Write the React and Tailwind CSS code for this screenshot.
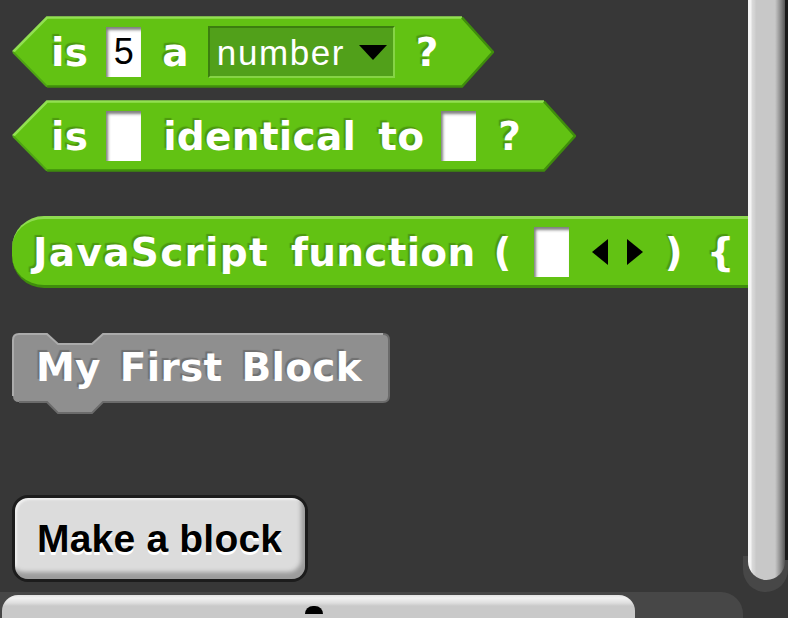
import React from "react";

const label =
  "font-['DejaVu_Sans',sans-serif] font-bold text-[39px] tracking-[0.3px] leading-none text-white [text-shadow:-2px_-2px_1px_rgba(0,0,0,0.22)]";

const Slot = ({ children, className = "" }) => (
  <div
    className={`flex h-[50px] w-[35px] items-center justify-center bg-white shadow-[inset_2px_3px_3px_rgba(0,0,0,0.5)] font-['Liberation_Sans',sans-serif] text-[36px] leading-none text-black ${className}`}
  >
    {children}
  </div>
);

const Hexagon = ({ width, children }) => {
  const w = width;
  const pts = `1,36 35,1 ${w - 32},1 ${w - 1},36 ${w - 32},71 35,71`;
  return (
    <div className="relative h-[72px]" style={{ width }}>
      <svg className="absolute inset-0" width={w} height="72" viewBox={`0 0 ${w} 72`}>
        <polygon points={pts} fill="#62c213" />
        <polyline points={`1,36 35,1.5 ${w - 32},1.5`} fill="none" stroke="#92e052" strokeWidth="2.5" />
        <polyline
          points={`${w - 32},1.5 ${w - 1},36 ${w - 32},70.5 35,70.5`}
          fill="none"
          stroke="#3f8d0c"
          strokeWidth="2.5"
        />
        <polyline points={`1,36 35,70.5`} fill="none" stroke="#4ea314" strokeWidth="2" />
      </svg>
      <div className="relative flex h-full items-center pl-[39px]">{children}</div>
    </div>
  );
};

const Dropdown = () => (
  <div className="flex h-[52px] w-[187px] items-center justify-between border-2 border-t-[#3c7e0f] border-l-[#3c7e0f] border-r-[#86d446] border-b-[#86d446] bg-[#51a01a] pl-[7px] pr-[6px]">
    <span className="font-['Liberation_Sans',sans-serif] text-[35px] leading-none tracking-[1.6px] text-white">
      number
    </span>
    <svg width="28" height="15" viewBox="0 0 28 15">
      <polygon points="0,0 28,0 14,15" fill="#000" />
    </svg>
  </div>
);

export default function App() {
  return (
    <div className="flex h-[618px] w-[788px] flex-col overflow-hidden bg-[#373737]">
      <div className="flex h-[592px]">
        {/* palette */}
        <div className="flex w-[748px] flex-col overflow-hidden pl-[12px] pt-[16px]">
          <Hexagon width={482}>
            <span className={label}>is</span>
            <Slot className="ml-[18px]">5</Slot>
            <span className={`${label} ml-[21px]`}>a</span>
            <div className="ml-[19px]">
              <Dropdown />
            </div>
            <span className={`${label} ml-[21px]`}>?</span>
          </Hexagon>

          <div className="mt-[12px]">
            <Hexagon width={564}>
              <span className={label}>is</span>
              <Slot className="ml-[18px]">{""}</Slot>
              <span className={`${label} ml-[22px]`}>identical</span>
              <span className={`${label} ml-[22px]`}>to</span>
              <Slot className="ml-[17px]">{""}</Slot>
              <span className={`${label} ml-[22px]`}>?</span>
            </Hexagon>
          </div>

          <div className="mt-[44px] flex h-[72px] w-[760px] shrink-0 items-center rounded-l-[32px] border-t-[3px] border-b-[3px] border-t-[#8edb50] border-b-[#3f8d0c] bg-[#62c213] pl-[21px]">
            <span className={`${label} tracking-[1.3px]`}>JavaScript</span>
            <span className={`${label} ml-[22px]`}>function</span>
            <span className={`${label} ml-[18px]`}>(</span>
            <Slot className="ml-[22px]">{""}</Slot>
            <svg className="ml-[23px]" width="16" height="26" viewBox="0 0 16 26">
              <polygon points="16,0 16,26 0,13" fill="#000" />
            </svg>
            <svg className="ml-[19px]" width="16" height="26" viewBox="0 0 16 26">
              <polygon points="0,0 0,26 16,13" fill="#000" />
            </svg>
            <span className={`${label} ml-[22px]`}>)</span>
            <span className={`${label} ml-[24px]`}>{"{"}</span>
          </div>

          <div className="relative mt-[45px] h-[81px] w-[378px] shrink-0">
            <svg className="absolute inset-0" width="378" height="81" viewBox="0 0 378 81">
              <path
                d="M1,7 Q1,1 7,1 L35,1 L46,11 L80,11 L91,1 L371,1 Q377,1 377,7 L377,63 Q377,69 371,69 L91,69 L80,80 L46,80 L35,69 L7,69 Q1,69 1,63 Z"
                fill="#8f8f8f"
              />
              <path d="M1,63 L1,7 Q1,1 7,1 L35,1 L46,11 L80,11 L91,1 L371,1" fill="none" stroke="#ababab" strokeWidth="2" />
              <path
                d="M371,1 Q377,1 377,7 L377,63 Q377,69 371,69 L91,69 L80,80 L46,80 L35,69 L7,69"
                fill="none"
                stroke="#6b6b6b"
                strokeWidth="2"
              />
            </svg>
            <div className="relative flex h-[69px] items-center pl-[24px]">
              <span className={label}>My</span>
              <span className={`${label} ml-[19px]`}>First</span>
              <span className={`${label} ml-[19px]`}>Block</span>
            </div>
          </div>

          <div className="mt-[81px] flex h-[87px] w-[296px] shrink-0 items-center rounded-[16px] border-[3px] border-[#1c1c1c] bg-[#dcdcdc] pl-[22px] shadow-[inset_-4px_-7px_4px_#9c9c9c,inset_2px_2px_2px_#efefef]">
            <span className="font-['Liberation_Sans',sans-serif] text-[39px] font-bold leading-none tracking-[0.2px] text-black [text-shadow:0_3px_0_#ffffff]">
              Make a block
            </span>
          </div>
        </div>

        {/* vertical scrollbar */}
        <div className="relative flex w-[40px]">
          <div className="absolute -left-[5px] right-0 bottom-0 h-[36px] rounded-b-[24px] bg-[#474747]" />
          <div className="relative h-[580px] w-[37px] rounded-b-[19px] bg-[linear-gradient(to_right,#f4f4f4_0px,#f4f4f4_3px,#dadada_4px,#d0d0d0_7px,#c8c8c8_8px,#c8c8c8_27px,#a8a8a8_30px,#7a7a7a_34px,#555555_37px)]" />
          <div className="relative h-[560px] w-[3px] bg-[#1a1a1a]" />
        </div>
      </div>

      {/* horizontal scrollbar */}
      <div className="flex h-[26px]">
        <div className="h-full w-[743px] rounded-tr-[22px] bg-[#474747] pl-[2px] pt-[3px]">
          <div className="h-full w-[633px] rounded-t-[16px] bg-[linear-gradient(to_bottom,#e2e2e2_0px,#f2f2f2_3px,#dedede_8px,#c9c9c9_11px,#c9c9c9_100%)] pl-[303px] pt-[11px]">
            <div className="h-[8px] w-[18px] rounded-t-full bg-black" />
          </div>
        </div>
      </div>
    </div>
  );
}
